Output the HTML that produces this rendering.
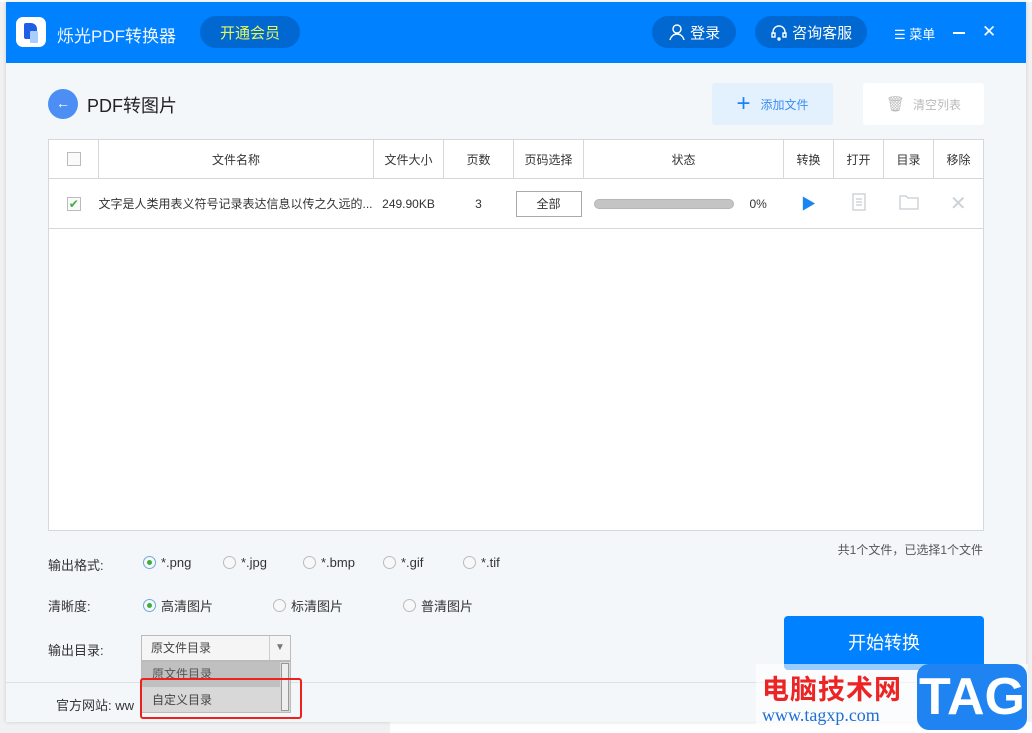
<!DOCTYPE html>
<html><head><meta charset="utf-8"><style>
*{margin:0;padding:0;box-sizing:border-box}
body{width:1032px;height:733px;background:#f0f1f3;position:relative;overflow:hidden;font-family:"Liberation Sans","Noto Sans CJK SC",sans-serif;color:#333}
.abs{position:absolute}
#win{left:6px;top:2px;width:1020px;height:720px;background:#f4f7fa;box-shadow:0 0 4px rgba(0,0,0,.15)}
#hdr{left:6px;top:2px;width:1020px;height:61px;background:#0081ff}
.pill{background:#0068d0;border-radius:16px;height:32px;color:#fff;font-size:15px;display:flex;align-items:center;justify-content:center}
table{border-collapse:collapse;position:absolute;left:48px;top:139px;background:#fff}
td{border:1px solid #d4d8dc;text-align:center;font-size:12px;color:#333}
.cb{display:inline-block;width:14px;height:14px;border:1px solid #bbb;background:#fafafa;vertical-align:middle}
.r{display:inline-block;width:13px;height:13px;border:1px solid #bbb;border-radius:50%;background:#f8f8f8;vertical-align:middle;margin-right:5px;position:relative}
.r.on{border-color:#6aa9e0}.r.on:after{content:"";position:absolute;left:3px;top:3px;width:5px;height:5px;border-radius:50%;background:#3caf3c}
.lbl{font-size:13px;color:#333}
.opt{font-size:13px;color:#333;display:flex;align-items:center}
</style></head><body>
<div class="abs" style="left:0;top:0;width:1032px;height:2px;background:#fff"></div>
<div class="abs" style="left:390px;top:722px;width:642px;height:11px;background:#fff"></div>
<div id="win" class="abs"></div>
<div id="hdr" class="abs"></div>
<div class="abs" style="left:16px;top:17px;width:30px;height:30px;background:#fff;border-radius:7px"></div>
<div class="abs" style="left:24px;top:23px;width:13px;height:16px;background:#1f5fe8;border-radius:2px 6px 6px 2px"></div>
<div class="abs" style="left:30px;top:31px;width:8px;height:12px;background:#a8cffc;border-radius:1px"></div>
<div class="abs" style="left:57px;top:22px;color:#eef5ff;font-size:17px">烁光PDF转换器</div>
<div class="abs pill" style="left:200px;top:16px;width:100px;color:#e6f75c">开通会员</div>
<div class="abs pill" style="left:652px;top:16px;width:84px"><svg width="18" height="18" viewBox="0 0 18 18" fill="none" stroke="#fff" stroke-width="1.4"><circle cx="9" cy="6" r="4"/><path d="M2 17c1-4 4-6 7-6s6 2 7 6"/></svg>&nbsp;登录</div>
<div class="abs pill" style="left:755px;top:16px;width:112px"><svg width="18" height="18" viewBox="0 0 18 18" fill="none" stroke="#fff" stroke-width="1.4"><path d="M3 11V9a6 6 0 0 1 12 0v2"/><rect x="2" y="10" width="3" height="4"/><rect x="13" y="10" width="3" height="4"/><circle cx="9" cy="16" r="1"/></svg>&nbsp;咨询客服</div>
<div class="abs" style="left:894px;top:24px;color:#fff;font-size:13px">☰ 菜单</div>
<div class="abs" style="left:953px;top:32px;width:12px;height:1.5px;background:#fff"></div>
<div class="abs" style="left:982px;top:22px;color:#fff;font-size:17px">✕</div>

<div class="abs" style="left:48px;top:89px;width:30px;height:30px;border-radius:50%;background:#4d8ef5;color:#fff;text-align:center;line-height:29px;font-size:14px">←</div>
<div class="abs" style="left:87px;top:92px;font-size:18px;color:#222">PDF转图片</div>
<div class="abs" style="left:712px;top:83px;width:121px;height:42px;background:#e3f0fd;border-radius:3px;display:flex;align-items:center;justify-content:center;color:#3b8ef0;font-size:12px"><span style="font-size:24px;color:#1a84f2;margin-right:10px;font-weight:300">+</span>添加文件</div>
<div class="abs" style="left:863px;top:83px;width:121px;height:42px;background:#fff;border-radius:3px;display:flex;align-items:center;justify-content:center;color:#bbb;font-size:12px"><span style="font-size:15px;margin-right:8px">🗑</span>清空列表</div>

<table>
<tr style="height:39px"><td style="width:50px"><span class="cb"></span></td><td style="width:275px">文件名称</td><td style="width:70px">文件大小</td><td style="width:70px">页数</td><td style="width:70px">页码选择</td><td style="width:200px">状态</td><td style="width:50px">转换</td><td style="width:50px">打开</td><td style="width:50px">目录</td><td style="width:50px">移除</td></tr>
<tr style="height:50px"><td style="border-right:none"><span class="cb" style="color:#3caf3c;font-size:12px;line-height:12px">✔</span></td><td style="border-left:none;border-right:none;text-align:left">文字是人类用表义符号记录表达信息以传之久远的...</td><td style="border-left:none;border-right:none">249.90KB</td><td style="border-left:none;border-right:none">3</td><td style="border-left:none;border-right:none"><div style="width:66px;height:26px;border:1px solid #aaa;margin:auto;line-height:24px">全部</div></td><td style="border-left:none;border-right:none;text-align:left;padding-left:10px"><span style="display:inline-block;width:140px;height:10px;background:#c4c4c4;border:1px solid #b5b5b5;border-radius:5px;vertical-align:middle"></span><span style="margin-left:16px">0%</span></td><td style="border-left:none;border-right:none;color:#1a84f2;font-size:15px">▶</td><td style="border-left:none;border-right:none"><svg width="14" height="18" viewBox="0 0 14 18" fill="none" stroke="#c8ced3" stroke-width="1.3"><rect x="1" y="1" width="12" height="16"/><path d="M4 6h6M4 9h6M4 12h6"/></svg></td><td style="border-left:none;border-right:none"><svg width="20" height="16" viewBox="0 0 20 16" fill="none" stroke="#c8ced3" stroke-width="1.3"><path d="M1 2h6l2 2h10v11H1z"/></svg></td><td style="border-left:none;color:#ccd2d7;font-size:20px">✕</td></tr>
<tr style="height:302px"><td colspan="10" style="border-top:1px solid #d4d8dc"></td></tr>
</table>

<div class="abs" style="right:49px;top:541px;font-size:12px;color:#555">共1个文件，已选择1个文件</div>
<div class="abs lbl" style="left:48px;top:555px">输出格式:</div>
<div class="abs opt" style="left:143px;top:555px"><span class="r on"></span>*.png</div>
<div class="abs opt" style="left:223px;top:555px"><span class="r"></span>*.jpg</div>
<div class="abs opt" style="left:303px;top:555px"><span class="r"></span>*.bmp</div>
<div class="abs opt" style="left:383px;top:555px"><span class="r"></span>*.gif</div>
<div class="abs opt" style="left:463px;top:555px"><span class="r"></span>*.tif</div>
<div class="abs lbl" style="left:48px;top:596px">清晰度:</div>
<div class="abs opt" style="left:143px;top:596px"><span class="r on"></span>高清图片</div>
<div class="abs opt" style="left:273px;top:596px"><span class="r"></span>标清图片</div>
<div class="abs opt" style="left:403px;top:596px"><span class="r"></span>普清图片</div>
<div class="abs lbl" style="left:48px;top:640px">输出目录:</div>
<div class="abs" style="left:141px;top:635px;width:150px;height:26px;background:#f5f5f5;border:1px solid #bbb;font-size:12px;color:#444;line-height:24px;padding-left:9px">原文件目录<span style="position:absolute;right:0;top:0;width:21px;height:24px;border-left:1px solid #ccc;text-align:center;color:#777;font-size:10px">▼</span></div>
<div class="abs" style="left:6px;top:682px;width:1020px;height:1px;background:#dde1e5"></div>
<div class="abs" style="left:56px;top:695px;font-size:13px;color:#333">官方网站: ww</div>
<div class="abs" style="left:141px;top:661px;width:150px;height:52px;background:#d8d8d8;border:1px solid #bbb"></div>
<div class="abs" style="left:142px;top:662px;width:138px;height:25px;background:#c0c0c0;font-size:12px;color:#555;line-height:24px;padding-left:10px">原文件目录</div>
<div class="abs" style="left:142px;top:688px;width:138px;height:24px;font-size:12px;color:#444;line-height:24px;padding-left:10px">自定义目录</div>
<div class="abs" style="left:281px;top:663px;width:8px;height:48px;border:1px solid #999;background:#eee"></div>
<div class="abs" style="left:140px;top:678px;width:162px;height:41px;border:2px solid #f0211b;border-radius:3px"></div>

<div class="abs" style="left:784px;top:616px;width:200px;height:54px;background:#0081ff;border-radius:4px;color:#fff;font-size:18px;text-align:center;line-height:54px">开始转换</div>
<div class="abs" style="left:756px;top:664px;width:272px;height:69px;background:rgba(255,255,255,.6)"></div>
<div class="abs" style="left:762px;top:668px;font-size:27px;font-weight:bold;color:#ec2424;font-family:'Noto Sans CJK SC',sans-serif;letter-spacing:1px">电脑技术网</div>
<div class="abs" style="left:762px;top:705px;font-size:18px;color:#1f6fd6;font-family:'Liberation Serif',serif">www.tagxp.com</div>
<div class="abs" style="left:917px;top:664px;width:110px;height:66px;background:#1f84f2;border-radius:12px;color:#fff;font-size:52px;font-weight:bold;text-align:center;line-height:66px">TAG</div>
</body></html>
